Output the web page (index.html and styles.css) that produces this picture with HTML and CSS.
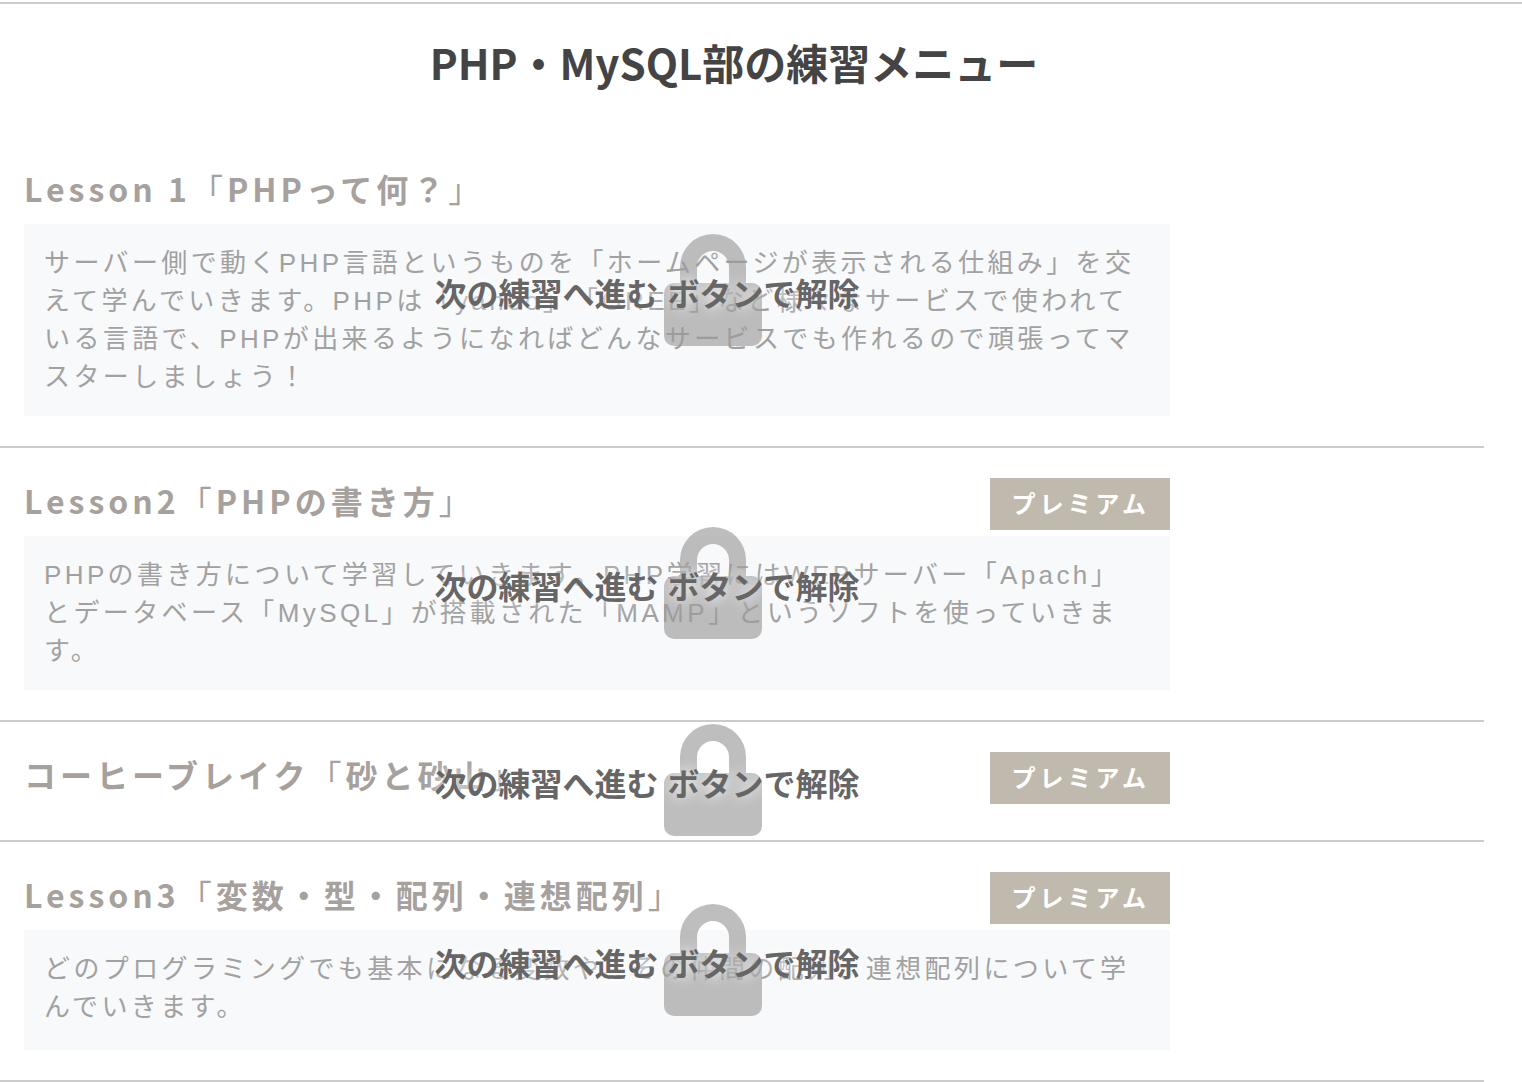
FILE: index.html
```html
<!DOCTYPE html>
<html lang="ja">
<head>
<meta charset="utf-8">
<meta name="viewport" content="width=device-width, initial-scale=1">
<title>PHP・MySQL部の練習メニュー</title>
<link rel="stylesheet" href="styles.css">
</head>
<body>
<svg class="symbols" aria-hidden="true">
  <symbol id="lock" viewBox="0 0 98 112">
    <path d="M16 49V33a33 33 0 0 1 66 0V49H88a10 10 0 0 1 10 10V102a10 10 0 0 1-10 10H10a10 10 0 0 1-10-10V59a10 10 0 0 1 10-10ZM33 49H65V33a16 16 0 0 0-32 0Z"/>
  </symbol>
</svg>
<main class="menu">
  <h1 class="menu-title">PHP・MySQL部の練習メニュー</h1>
  <ul class="lessons">
    <li class="lesson">
      <div class="lesson-head">
        <h2 class="lesson-title">Lesson 1<span class="bracket">「</span>PHPって何？<span class="bracket">」</span></h2>
      </div>
      <p class="lesson-text">サーバー側で動くPHP言語というものを「ホームページが表示される仕組み」を交えて学んでいきます。PHPは「yahoo」「GREE」など様々なサービスで使われている言語で、PHPが出来るようになればどんなサービスでも作れるので頑張ってマスターしましょう！</p>
      <div class="locked"><svg class="lock"><use href="#lock"/></svg><p class="locked-text">次の練習へ進む ボタンで解除</p></div>
    </li>
    <li class="lesson">
      <div class="lesson-head">
        <h2 class="lesson-title">Lesson2<span class="bracket">「</span>PHPの書き方<span class="bracket">」</span></h2>
        <span class="premium">プレミアム</span>
      </div>
      <p class="lesson-text">PHPの書き方について学習していきます。PHP学習にはWEBサーバー「Apach」とデータベース「MySQL」が搭載された「MAMP」というソフトを使っていきます。</p>
      <div class="locked"><svg class="lock"><use href="#lock"/></svg><p class="locked-text">次の練習へ進む ボタンで解除</p></div>
    </li>
    <li class="lesson">
      <div class="lesson-head">
        <h2 class="lesson-title">コーヒーブレイク<span class="bracket">「</span>砂と砂山<span class="bracket">」</span></h2>
        <span class="premium">プレミアム</span>
      </div>
      <div class="locked"><svg class="lock"><use href="#lock"/></svg><p class="locked-text">次の練習へ進む ボタンで解除</p></div>
    </li>
    <li class="lesson">
      <div class="lesson-head">
        <h2 class="lesson-title">Lesson3<span class="bracket">「</span>変数・型・配列・連想配列<span class="bracket">」</span></h2>
        <span class="premium">プレミアム</span>
      </div>
      <p class="lesson-text">どのプログラミングでも基本になる変数や、その仲間の配列、連想配列について学んでいきます。</p>
      <div class="locked"><svg class="lock"><use href="#lock"/></svg><p class="locked-text">次の練習へ進む ボタンで解除</p></div>
    </li>
  </ul>
</main>
</body>
</html>
```
FILE: styles.css
```css
* {
  box-sizing: border-box;
}

body {
  margin: 0;
  padding-top: 2px;
  background: #fff;
  color: #444;
  font-family: "Liberation Sans", "Noto Sans CJK JP", sans-serif;
  text-spacing-trim: space-all;
}

h1,
h2,
p {
  margin: 0;
}

h1,
h2 {
  font-family: "Noto Sans CJK JP", sans-serif;
}

.symbols {
  display: none;
}

.menu {
  border-top: 2px solid #ccc;
  padding-right: 38px;
}

.menu-title {
  padding: 28px 16px 44px 0;
  font-size: 42px;
  line-height: 60px;
  text-align: center;
}

.lessons {
  margin: 0;
  padding: 0;
  list-style: none;
}

.lesson {
  position: relative;
  padding: 30px 28px 30px 24px;
  border-bottom: 2px solid #ccc;
}

.lesson-head {
  display: flex;
  justify-content: space-between;
  width: 80%;
  height: 58px;
}

.lesson-title {
  color: #a6a19d;
  font-size: 32px;
  line-height: 44px;
  letter-spacing: 4px;
}

.bracket {
  font-weight: 400;
}

.premium {
  width: 180px;
  height: 52px;
  padding-left: 22px;
  background: #bfbaad;
  color: #fff;
  font-size: 24px;
  font-weight: 700;
  line-height: 54px;
  letter-spacing: 4px;
}

.lesson-text {
  width: 80%;
  min-height: 120px;
  padding: 20px 24px 20px 20px;
  background: #f8f9fb;
  color: #a1a1a1;
  font-size: 26px;
  line-height: 38px;
  letter-spacing: 0.13em;
}

.locked {
  position: absolute;
  inset: 0 0 2px;
  display: grid;
  align-items: center;
  justify-items: center;
  padding-right: 58px;
}

.lock {
  grid-area: 1 / 1;
  width: 98px;
  height: 112px;
  fill: #999;
  fill-opacity: 0.64;
}

.locked-text {
  grid-area: 1 / 1;
  padding: 10px 132px 0 0;
  color: #666;
  font-size: 32px;
  font-weight: 700;
  line-height: 48px;
  text-shadow: 0 0 14px #fff;
}
```
